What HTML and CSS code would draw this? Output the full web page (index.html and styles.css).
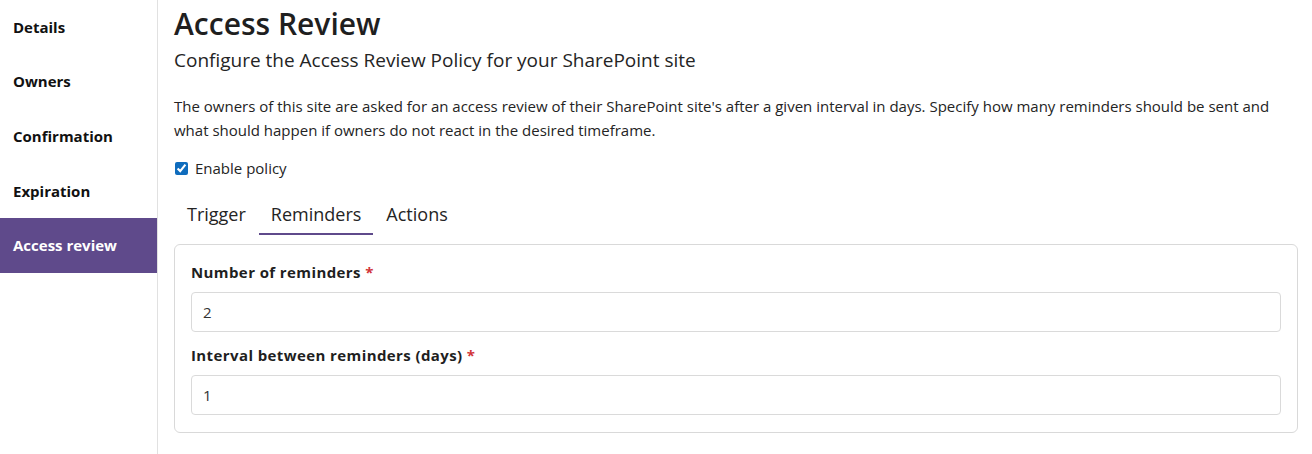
FILE: index.html
```html
<!DOCTYPE html>
<html>
<head>
<meta charset="utf-8">
<link rel="stylesheet" href="styles.css">
</head>
<body>
<div class="layout">
  <nav class="sidebar">
    <div class="nav-item">Details</div>
    <div class="nav-item">Owners</div>
    <div class="nav-item">Confirmation</div>
    <div class="nav-item">Expiration</div>
    <div class="nav-item active">Access review</div>
  </nav>
  <main class="main">
    <h1 class="title">Access Review</h1>
    <h2 class="subtitle">Configure the Access Review Policy for your SharePoint site</h2>
    <p class="desc">The owners of this site are asked for an access review of their SharePoint site's after a given interval in days. Specify how many reminders should be sent and what should happen if owners do not react in the desired timeframe.</p>
    <label class="check"><input type="checkbox" checked> <span>Enable policy</span></label>
    <div class="tabs">
      <div class="tab">Trigger</div>
      <div class="tab selected">Reminders</div>
      <div class="tab">Actions</div>
    </div>
    <div class="card">
      <div class="field">
        <div class="label">Number of reminders <span class="req">*</span></div>
        <div class="input">2</div>
      </div>
      <div class="field">
        <div class="label">Interval between reminders (days) <span class="req">*</span></div>
        <div class="input">1</div>
      </div>
    </div>
  </main>
</div>
</body>
</html>
```
FILE: styles.css
```css
* { box-sizing: border-box; }
html, body { margin: 0; padding: 0; background: #fff; }
body {
  font-family: "Open Sans", "Noto Sans", sans-serif;
  color: #242424;
  height: 454px;
  overflow: hidden;
}
.layout { display: flex; height: 454px; }
.sidebar {
  width: 158px;
  flex: none;
  border-right: 1px solid #e1e1e1;
}
.nav-item {
  height: 54.6px;
  display: flex;
  align-items: center;
  padding-left: 13px;
  padding-bottom: 1px;
  font-weight: 700;
  font-size: 15px;
  color: #111;
}
.nav-item.active { background: #5f4a8b; color: #fff; }
.main { flex: 1; padding: 4px 14px 0 16px; }
.title {
  margin: 0;
  font-size: 30px;
  font-weight: 600;
  line-height: 40px;
  color: #1f1f1f;
}
.subtitle {
  margin: 3px 0 0;
  font-size: 19px;
  font-weight: 400;
  line-height: 26px;
  color: #242424;
}
.desc {
  margin: 21px 0 0;
  font-size: 15px;
  line-height: 24px;
  color: #242424;
}
.check {
  display: flex;
  align-items: center;
  gap: 7px;
  margin-top: 16px;
  padding-left: 1px;
  font-size: 15px;
  line-height: 20px;
}
.check input { margin: 0; width: 13px; height: 13px; accent-color: #0f6cbd; }
.tabs { display: flex; margin-top: 20px; padding-left: 1px; }
.tab {
  font-size: 18px;
  line-height: 24px;
  padding: 4px 12px 7px 12px;
  border-bottom: 2px solid transparent;
  margin-right: 1px;
}
.tab.selected { border-bottom-color: #5f4a8b; }
.card {
  margin-top: 9px;
  border: 1px solid #d9d9d9;
  border-radius: 6px;
  padding: 17px 16px 17px 16px;
  display: flex;
  flex-direction: column;
  gap: 13px;
}
.label {
  font-size: 15px;
  font-weight: 700;
  line-height: 20px;
  letter-spacing: 0.4px;
  color: #1f1f1f;
}
.req { color: #d13438; }
.input {
  margin-top: 10px;
  height: 40px;
  border: 1px solid #dadada;
  border-radius: 4px;
  display: flex;
  align-items: center;
  padding-left: 11px;
  font-size: 15px;
  color: #333;
}
```
